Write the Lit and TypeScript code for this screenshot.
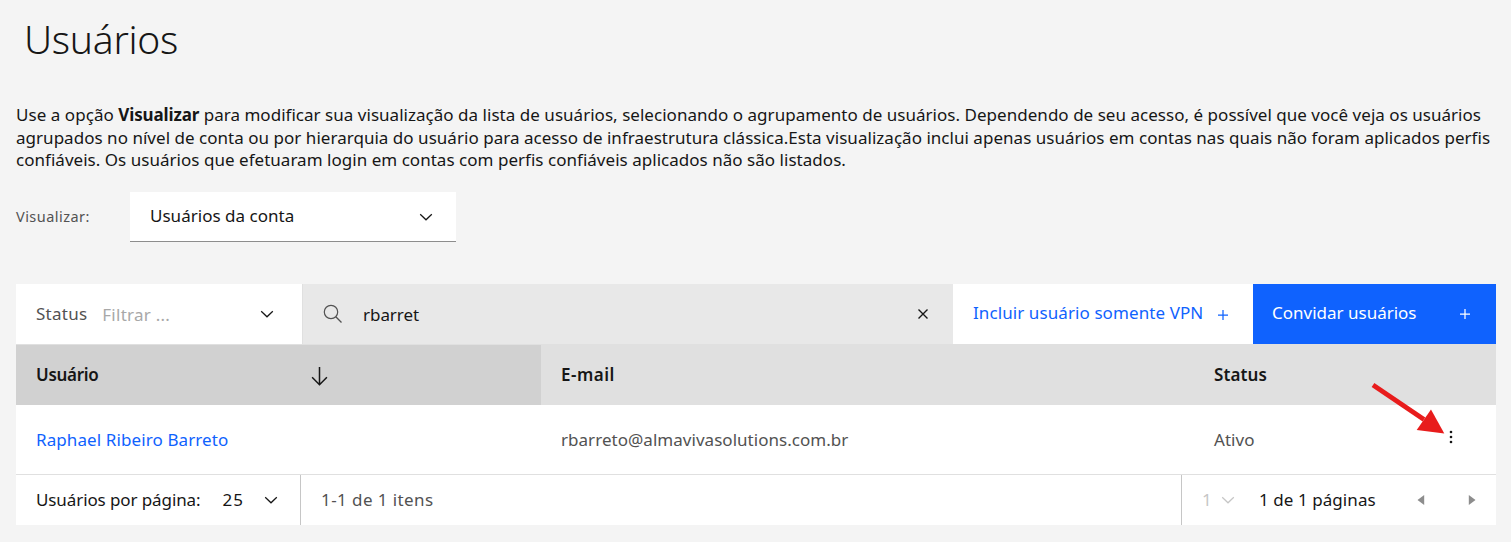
import { LitElement, html, css } from "lit";
import { customElement } from "lit/decorators.js";

const chevron = html`<svg class="chevron" width="14" height="8" viewBox="0 0 14 8">
  <path d="M1.2 1.2L7 6.8L12.8 1.2" fill="none" stroke="currentColor" stroke-width="1.25" />
</svg>`;

const plus = html`<svg width="12" height="12" viewBox="0 0 12 12">
  <path d="M6 1V11M1 6H11" fill="none" stroke="currentColor" stroke-width="1.25" />
</svg>`;

@customElement("app-root")
export class AppRoot extends LitElement {
  static styles = css`
    :host {
      display: block;
      box-sizing: border-box;
      height: 542px;
      padding: 14px 15px 0 16px;
      overflow: hidden;
      background: #f4f4f4;
      color: #161616;
      font: 400 17px/22px "Noto Sans", "Open Sans", sans-serif;
    }
    svg {
      display: block;
      flex: none;
    }
    h1 {
      margin: 0;
      padding-left: 8px;
      font-weight: 300;
      font-size: 39px;
      line-height: 50px;
      letter-spacing: -0.3px;
    }
    .intro {
      margin: 40px 0 0;
      line-height: 22.5px;
      white-space: nowrap;
    }
    .line {
      display: block;
      letter-spacing: 0.029px;
    }
    .line b {
      letter-spacing: -0.13px;
    }
    .line .lead {
      letter-spacing: 0.05px;
    }
    .view {
      display: flex;
      align-items: center;
      height: 50px;
      margin-top: 20.5px;
    }
    .view-label {
      width: 114px;
      padding-bottom: 2px;
      font-size: 14.5px;
      letter-spacing: 0.46px;
      color: #525252;
    }
    .view-select {
      display: flex;
      align-items: center;
      justify-content: space-between;
      box-sizing: border-box;
      width: 326px;
      height: 50px;
      padding: 0 23px 2px 20px;
      border-bottom: 1px solid #8d8d8d;
      background: #fff;
      letter-spacing: 0.02px;
    }
    .view-select .chevron {
      margin-top: 2px;
    }
    .toolbar {
      display: flex;
      height: 60px;
      margin-top: 42px;
    }
    .filter {
      display: flex;
      align-items: center;
      box-sizing: border-box;
      width: 286px;
      padding: 0 28px 0 20px;
      background: #fff;
      color: #525252;
      letter-spacing: 0.25px;
    }
    .placeholder {
      margin: 1px auto 0 15px;
      color: #a8a8a8;
      letter-spacing: 0.25px;
    }
    .filter .chevron {
      color: #161616;
    }
    .search {
      display: flex;
      align-items: center;
      flex: 1;
      box-sizing: border-box;
      padding: 0 25px 0 20px;
      border-left: 1px solid #e0e0e0;
      background: #e8e8e8;
    }
    .query {
      margin: 1px auto 0 20px;
      letter-spacing: -0.05px;
    }
    .button {
      display: flex;
      align-items: center;
      justify-content: space-between;
      box-sizing: border-box;
      padding-bottom: 2px;
    }
    .button svg {
      margin-top: 3px;
    }
    .ghost {
      width: 300px;
      padding-left: 20px;
      padding-right: 24px;
      background: #fff;
      color: #0f62fe;
      letter-spacing: 0.09px;
    }
    .primary {
      width: 243px;
      padding-left: 19px;
      padding-right: 25px;
      background: #0f62fe;
      color: #fff;
      letter-spacing: 0;
    }
    .primary svg {
      margin-top: 1px;
    }
    .row {
      display: grid;
      grid-template-columns: 525px 653px 1fr;
    }
    .head {
      height: 60px;
      border-top: 1px solid #e0e0e0;
      background: #e0e0e0;
      font-weight: 600;
      letter-spacing: 0.1px;
    }
    .email {
      letter-spacing: 0.5px;
    }
    .cell {
      display: flex;
      align-items: center;
      padding-left: 20px;
    }
    .sorted {
      background: #d1d1d1;
      letter-spacing: -0.3px;
    }
    .sorted span {
      width: 274px;
    }
    .sorted svg {
      margin-top: 1px;
    }
    .body {
      height: 69px;
      border-bottom: 1px solid #e0e0e0;
      background: #fff;
      color: #525252;
      letter-spacing: 0.035px;
    }
    .user {
      color: #0f62fe;
      letter-spacing: 0.1px;
    }
    .state {
      justify-content: space-between;
    }
    .actions {
      margin: 0 43px 5px 0;
      color: #161616;
    }
    .pager {
      display: flex;
      align-items: center;
      height: 50px;
      background: #fff;
    }
    .size {
      display: flex;
      align-items: center;
      box-sizing: border-box;
      width: 285px;
      height: 50px;
      padding: 0 22px 0 20px;
      border-right: 1px solid #c6c6c6;
      letter-spacing: -0.1px;
    }
    .count {
      margin: 0 auto 0 22px;
      letter-spacing: 1px;
    }
    .total {
      flex: 1;
      padding-left: 20px;
      color: #525252;
      letter-spacing: 0.418px;
    }
    .pages {
      display: flex;
      align-items: center;
      box-sizing: border-box;
      width: 315px;
      height: 50px;
      padding: 0 20px 0 20px;
      border-left: 1px solid #c6c6c6;
      letter-spacing: 0.067px;
    }
    .disabled {
      display: flex;
      align-items: center;
      gap: 9px;
      width: 57px;
      color: #c6c6c6;
    }
    .arrows {
      display: flex;
      gap: 43px;
      margin-left: auto;
      color: #8d8d8d;
    }
    .pointer {
      position: absolute;
      left: 1368px;
      top: 378px;
    }
  `;

  render() {
    return html`
      <h1>Usuários</h1>
      <p class="intro">
        <span class="line"><span class="lead">Use a opção </span><b>Visualizar</b> para modificar sua visualização da lista de usuários, selecionando o agrupamento de usuários. Dependendo de seu acesso, é possível que você veja os usuários</span>
        <span class="line">agrupados no nível de conta ou por hierarquia do usuário para acesso de infraestrutura clássica.Esta visualização inclui apenas usuários em contas nas quais não foram aplicados perfis</span>
        <span class="line">confiáveis. Os usuários que efetuaram login em contas com perfis confiáveis aplicados não são listados.</span>
      </p>

      <div class="view">
        <span class="view-label">Visualizar:</span>
        <div class="view-select"><span>Usuários da conta</span>${chevron}</div>
      </div>

      <div class="toolbar">
        <div class="filter">
          <span>Status</span><span class="placeholder">Filtrar ...</span>${chevron}
        </div>
        <div class="search">
          <svg width="20" height="20" viewBox="0 0 20 20">
            <path d="M12.8 12.8L18.5 18.5" stroke="#525252" stroke-width="1.3" />
            <circle cx="8" cy="8" r="6.7" fill="none" stroke="#525252" stroke-width="1.2" />
          </svg>
          <span class="query">rbarret</span>
          <svg width="10" height="10" viewBox="0 0 10 10">
            <path d="M.5 .5L9.5 9.5M9.5 .5L.5 9.5" stroke="#161616" stroke-width="1.4" />
          </svg>
        </div>
        <div class="button ghost"><span>Incluir usuário somente VPN</span>${plus}</div>
        <div class="button primary"><span>Convidar usuários</span>${plus}</div>
      </div>

      <div class="row head">
        <div class="cell sorted">
          <span>Usuário</span>
          <svg width="19" height="20" viewBox="0 0 19 20">
            <path d="M9.5 1V18.6M2.1 11.3L9.5 18.7L16.9 11.3" fill="none" stroke="#161616" stroke-width="1.5" />
          </svg>
        </div>
        <div class="cell email">E-mail</div>
        <div class="cell">Status</div>
      </div>
      <div class="row body">
        <div class="cell user">Raphael Ribeiro Barreto</div>
        <div class="cell">rbarreto@almavivasolutions.com.br</div>
        <div class="cell state">
          <span>Ativo</span>
          <svg class="actions" width="4" height="14" viewBox="0 0 4 14" fill="currentColor">
            <circle cx="2" cy="2" r="1.3" />
            <circle cx="2" cy="7" r="1.3" />
            <circle cx="2" cy="12" r="1.3" />
          </svg>
        </div>
      </div>

      <div class="pager">
        <div class="size">
          <span>Usuários por página:</span><span class="count">25</span>${chevron}
        </div>
        <div class="total">1-1 de 1 itens</div>
        <div class="pages">
          <div class="disabled"><span>1</span>${chevron}</div>
          <span>1 de 1 páginas</span>
          <div class="arrows">
            <svg width="8" height="10" viewBox="0 0 8 10"><path d="M7.2 0V10L.5 5Z" fill="currentColor" /></svg>
            <svg width="8" height="10" viewBox="0 0 8 10"><path d="M.8 0V10L7.5 5Z" fill="currentColor" /></svg>
          </div>
        </div>
      </div>

      <svg class="pointer" width="80" height="60" viewBox="0 0 80 60">
        <path d="M5 7L56 41.5" stroke="#e81c1c" stroke-width="4.8" />
        <path d="M76.3 55.5L48.7 52L63 31.5Z" fill="#e81c1c" />
      </svg>
    `;
  }
}
